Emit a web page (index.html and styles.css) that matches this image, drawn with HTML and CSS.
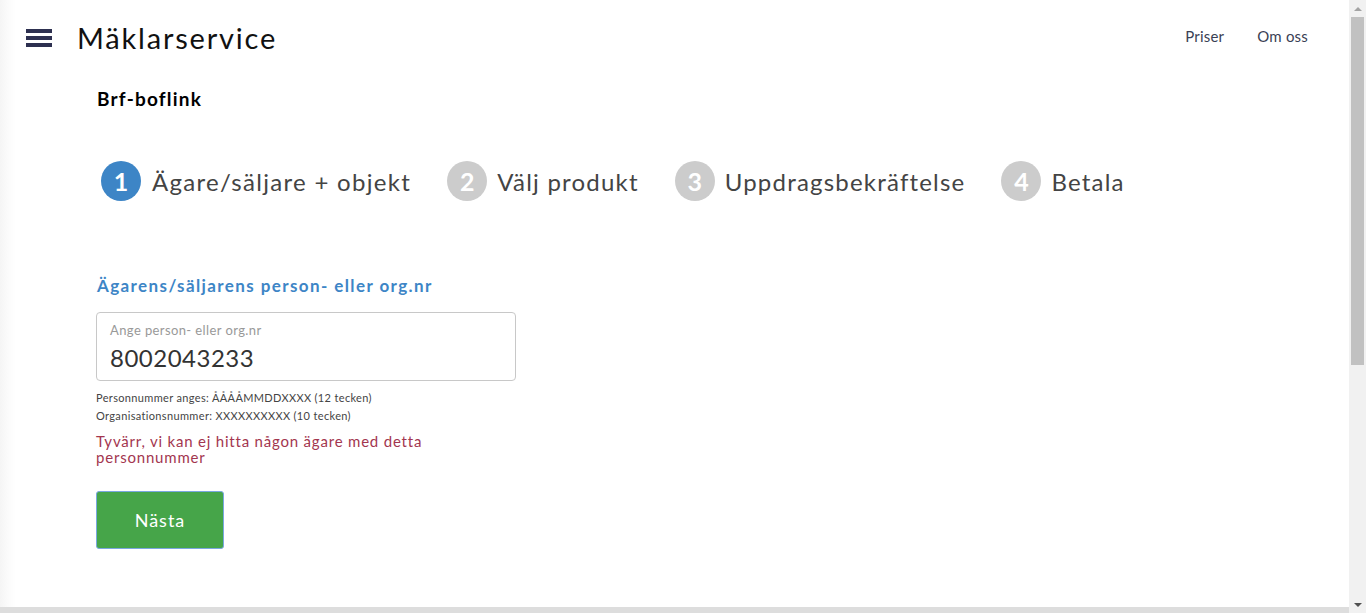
FILE: index.html
```html
<!DOCTYPE html>
<html lang="sv">
<head>
<meta charset="utf-8">
<title>Mäklarservice</title>
<link rel="stylesheet" href="styles.css">
</head>
<body>
<div class="page">
  <header class="topbar">
    <div class="brand">
      <button class="burger" aria-label="Meny"><span></span><span></span><span></span></button>
      <span class="logo">Mäklarservice</span>
    </div>
    <nav class="nav">
      <a href="#">Priser</a>
      <a href="#">Om oss</a>
    </nav>
  </header>
  <main class="content">
    <h1 class="org">Brf-boflink</h1>
    <ol class="steps">
      <li class="step active"><span class="num">1</span><span class="label">Ägare/säljare + objekt</span></li>
      <li class="step"><span class="num">2</span><span class="label">Välj produkt</span></li>
      <li class="step"><span class="num">3</span><span class="label">Uppdragsbekräftelse</span></li>
      <li class="step"><span class="num">4</span><span class="label">Betala</span></li>
    </ol>
    <section class="form">
      <h2 class="field-title">Ägarens/säljarens person- eller org.nr</h2>
      <label class="input-box">
        <span class="placeholder">Ange person- eller org.nr</span>
        <span class="value">8002043233</span>
      </label>
      <p class="hint">Personnummer anges: ÅÅÅÅMMDDXXXX (12 tecken)</p>
      <p class="hint">Organisationsnummer: XXXXXXXXXX (10 tecken)</p>
      <p class="error">Tyvärr, vi kan ej hitta någon ägare med detta personnummer</p>
      <button class="next">Nästa</button>
    </section>
  </main>
  <footer class="footer"></footer>
</div>
<div class="scrollbar" aria-hidden="true">
  <span class="arrow up"></span>
  <span class="thumb"></span>
  <span class="arrow down"></span>
</div>
</body>
</html>
```
FILE: styles.css
```css
html, body {
  margin: 0;
  padding: 0;
  overflow: hidden;
}
body {
  font-family: Lato, "Noto Sans", sans-serif;
  color: #333;
  background: #fff;
}
.page {
  margin-right: 17px;
  height: 613px;
  display: flex;
  flex-direction: column;
  background: linear-gradient(to right, #f5f5f5 0, #fbfbfb 8px, #fff 16px);
}
.topbar {
  height: 75px;
  flex: none;
  display: flex;
  align-items: center;
  justify-content: space-between;
  padding: 0 41px 0 26px;
}
.brand {
  display: flex;
  align-items: center;
  gap: 25px;
}
.burger {
  width: 26px;
  padding: 0;
  border: 0;
  background: none;
  display: flex;
  flex-direction: column;
  gap: 3px;
}
.burger span {
  display: block;
  height: 4px;
  background: #2d3050;
}
.logo {
  font-size: 29px;
  letter-spacing: 1.8px;
  color: #111;
}
.nav {
  display: flex;
  gap: 33px;
  margin-top: -4px;
}
.nav a {
  color: #3a3f55;
  text-decoration: none;
  font-size: 15px;
  letter-spacing: 0.2px;
}
.content {
  flex: 1;
  padding: 10px 0 0 96px;
}
.org {
  margin: 0 0 0 1px;
  font-size: 19px;
  font-weight: 700;
  color: #000;
  letter-spacing: 1.2px;
  line-height: 28px;
}
.steps {
  list-style: none;
  margin: 48px 0 0 5px;
  padding: 0;
  display: flex;
  gap: 36px;
}
.step {
  display: flex;
  align-items: center;
  gap: 10px;
}
.num {
  width: 40px;
  height: 40px;
  border-radius: 50%;
  background: #cccccc;
  color: #fff;
  font-weight: 700;
  font-size: 25px;
  display: flex;
  align-items: center;
  justify-content: center;
}
.step.active .num {
  background: #3d85c6;
}
.label {
  font-size: 24px;
  color: #444;
  letter-spacing: 1.2px;
}
.step.active .label {
  margin-left: 1px;
  letter-spacing: 1.3px;
}
.form {
  width: 420px;
  margin-top: 73px;
}
.field-title {
  margin: 0 0 0 1px;
  font-size: 17px;
  font-weight: 700;
  color: #3d85c6;
  letter-spacing: 1.4px;
  line-height: 24px;
}
.input-box {
  display: flex;
  flex-direction: column;
  margin-top: 14px;
  border: 1px solid #c8c8c8;
  border-radius: 4px;
  padding: 0 13px;
  box-sizing: border-box;
  height: 69px;
}
.placeholder {
  font-size: 13px;
  color: #999;
  margin-top: 9px;
  line-height: 16px;
  letter-spacing: 0.4px;
}
.value {
  font-size: 24px;
  color: #333;
  letter-spacing: 0.5px;
  line-height: 30px;
  margin-top: 5px;
}
.hint {
  margin: 0;
  font-size: 11px;
  color: #444;
  line-height: 18px;
  letter-spacing: 0.35px;
}
.hint:first-of-type {
  margin-top: 8px;
}
.error {
  margin: 8px 0 0;
  font-size: 15px;
  line-height: 16px;
  color: #a3364f;
  width: 340px;
  letter-spacing: 0.8px;
}
.next {
  margin-top: 26px;
  width: 128px;
  height: 58px;
  background: #46a549;
  color: #fff;
  border: 1px solid #7aa7e0;
  border-radius: 3px;
  font-family: inherit;
  font-size: 18px;
  letter-spacing: 1px;
}
.footer {
  flex: none;
  height: 6px;
  background: #dddddd;
}
.scrollbar {
  position: fixed;
  top: 0;
  right: 0;
  width: 17px;
  height: 613px;
  background: #f1f1f1;
  display: flex;
  flex-direction: column;
  align-items: center;
}
.arrow {
  flex: none;
  height: 17px;
  width: 17px;
  display: flex;
  align-items: center;
  justify-content: center;
}
.arrow::before {
  content: "";
  width: 0;
  height: 0;
  border-left: 4px solid transparent;
  border-right: 4px solid transparent;
}
.arrow.up::before {
  border-bottom: 4px solid #a3a3a3;
}
.arrow.down::before {
  border-top: 4px solid #505050;
}
.thumb {
  width: 13px;
  height: 348px;
  background: #c1c1c1;
  margin-bottom: auto;
}
```
